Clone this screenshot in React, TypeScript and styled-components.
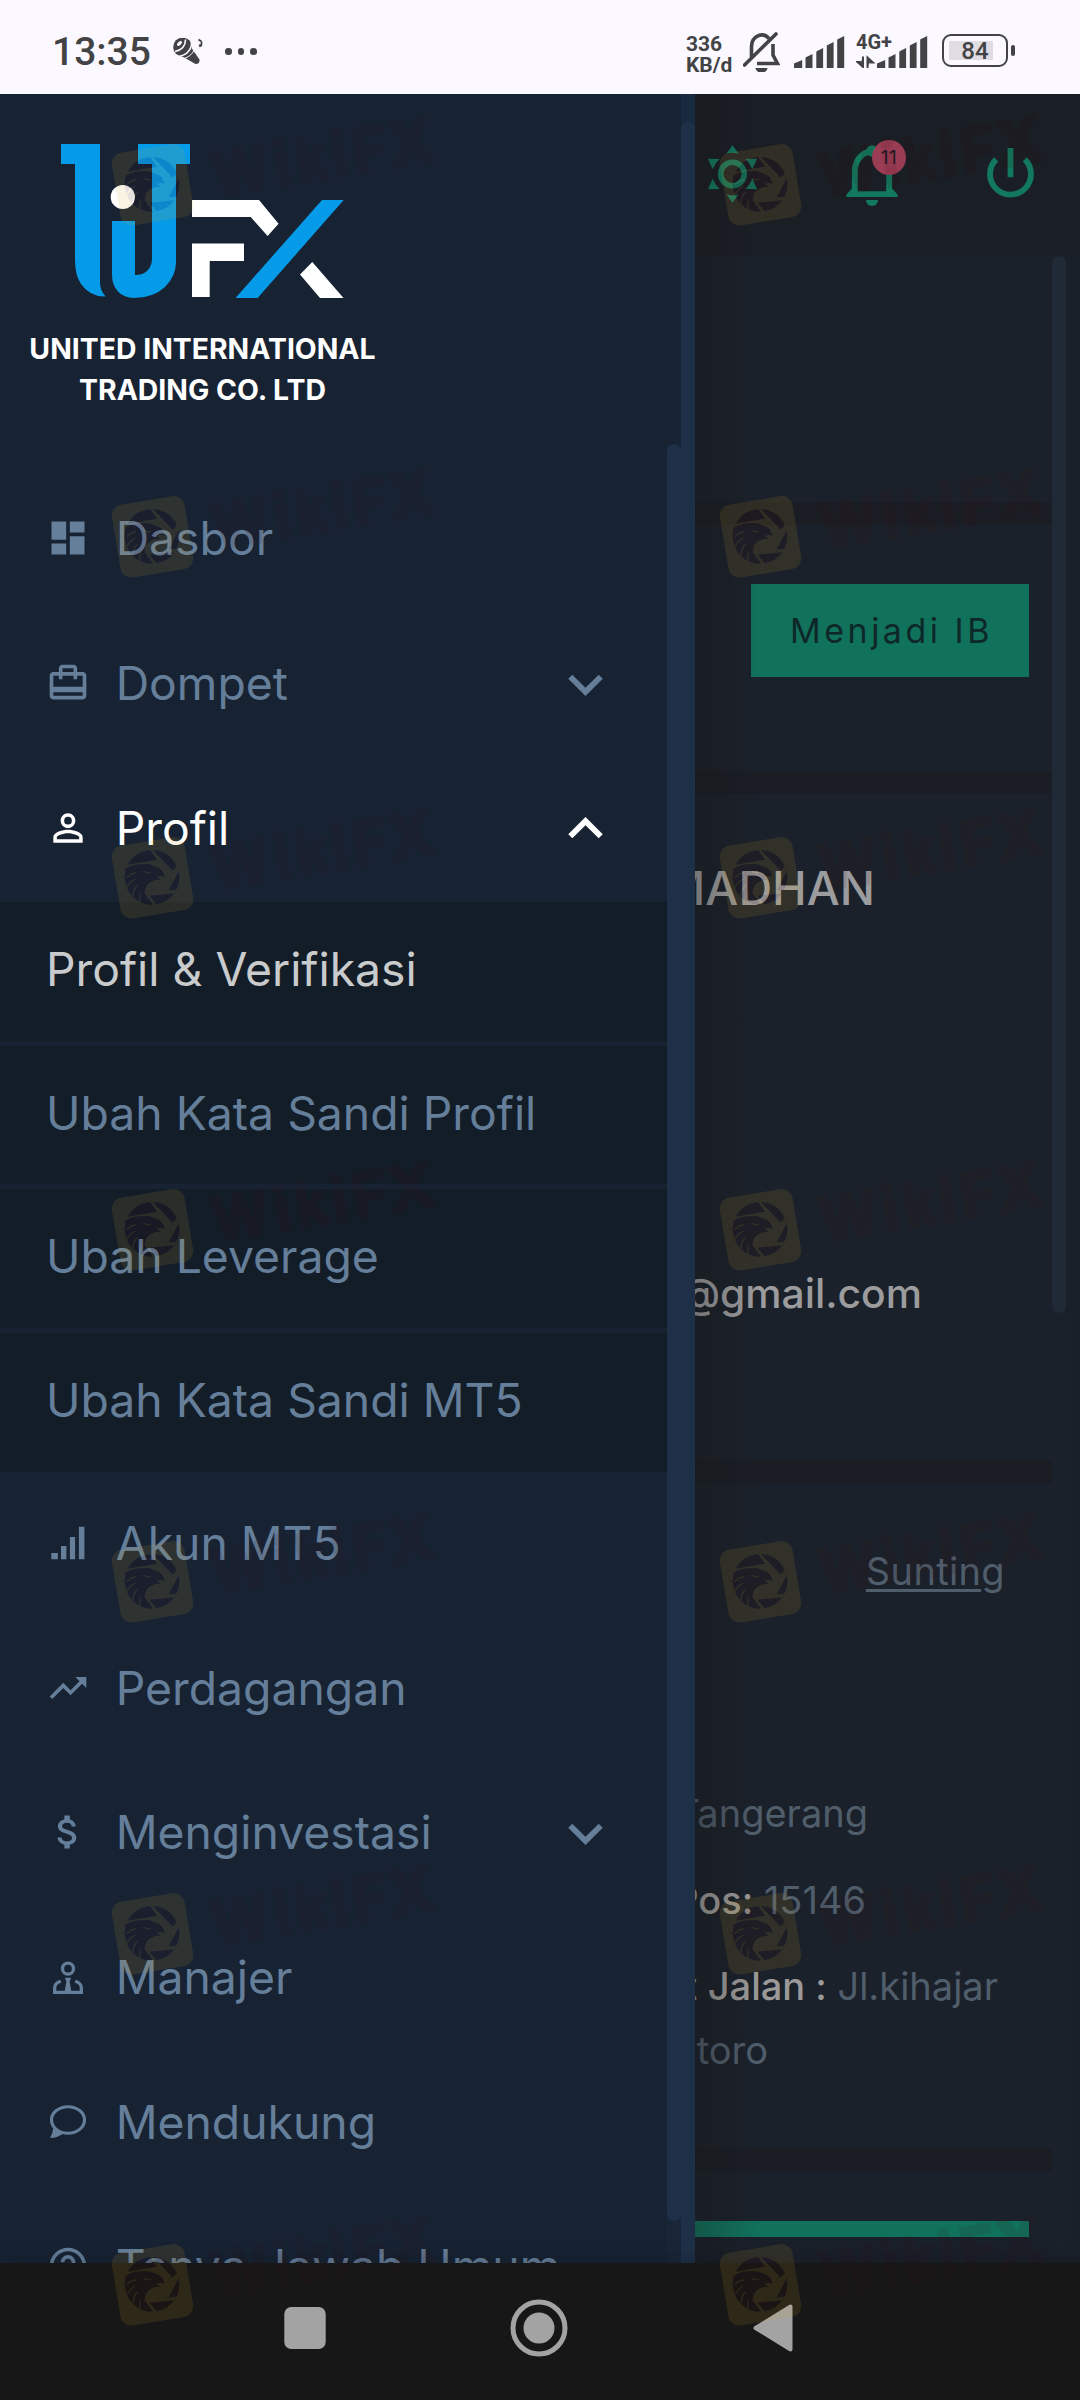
import React from "react";
import styled, { createGlobalStyle } from "styled-components";
import {
  MdDashboard,
  MdCardTravel,
  MdPersonOutline,
  MdTrendingUp,
  MdAttachMoney,
  MdHelpOutline,
  MdKeyboardArrowDown,
  MdKeyboardArrowUp,
} from "react-icons/md";

const GlobalStyle = createGlobalStyle`
  * { box-sizing: border-box; }
  body { margin: 0; background: #171717; }
`;

const ui = `"Inter", "Liberation Sans", sans-serif`;
const system = `"Roboto", "Liberation Sans", sans-serif`;

const Screen = styled.div`
  position: relative;
  display: flex;
  flex-direction: column;
  width: 1080px;
  height: 2400px;
  overflow: hidden;
  font-family: ${ui};
`;

/* ---------- system status bar ---------- */

const StatusBar = styled.header`
  display: flex;
  align-items: center;
  flex: 0 0 94px;
  padding: 9px 65px 0 52px;
  background: #fbf9ff;
  color: #434345;
  font-family: ${system};
`;

const Clock = styled.span`
  width: 121px;
  font-size: 39px;
  font-weight: 500;
  line-height: 44px;
`;

const Dots = styled.span`
  display: flex;
  gap: 6px;
  margin-left: 22px;

  i {
    width: 6.6px;
    height: 6.6px;
    border-radius: 50%;
    background: currentColor;
  }
`;

const StatusRight = styled.div`
  display: flex;
  align-items: center;
  margin-left: auto;
`;

const NetSpeed = styled.div`
  width: 57px;
  padding-top: 6px;
  font-size: 21px;
  font-weight: 700;
  line-height: 21px;
`;

const FirstSim = styled.div`
  display: flex;
  margin-left: 14px;
`;

const SecondSim = styled.div`
  position: relative;
  margin: 0 14px 0 11px;
  height: 32px;
`;

const NetType = styled.span`
  position: absolute;
  left: 0;
  top: -5px;
  font-size: 20px;
  font-weight: 700;
  line-height: 22px;
`;

const Battery = styled.div`
  position: relative;
  display: flex;
  align-items: center;
  justify-content: center;
  width: 66px;
  height: 33px;
  margin: -2px 7px 0 0;
  border: 2.6px solid currentColor;
  border-radius: 9px;
  background: linear-gradient(90deg, #dfdde3 44px, transparent 44px) 4.5px 4.5px / 56px 19px no-repeat;
  font-size: 24px;
  font-weight: 500;
  line-height: 24px;

  &::after {
    content: "";
    position: absolute;
    right: -9px;
    top: 8.5px;
    width: 4px;
    height: 11px;
    border-radius: 2px;
    background: currentColor;
  }
`;

/* ---------- drawer ---------- */

const Body = styled.div`
  display: flex;
  flex: 0 0 2169px;
  overflow: hidden;
`;

const Drawer = styled.aside`
  display: flex;
  flex: 0 0 695px;
  background: #172333;
`;

const DrawerColumn = styled.div`
  display: flex;
  flex-direction: column;
  width: 681px;
`;

const Brand = styled.div`
  display: flex;
  flex-direction: column;
  align-items: center;
  flex: 0 0 350px;
  width: 405px;
  padding-top: 50px;
`;

const BrandName = styled.div`
  margin-top: 30px;
  color: #fff;
  font-size: 28.4px;
  font-weight: 700;
  line-height: 41px;
  text-align: center;
  white-space: nowrap;
`;

const MenuArea = styled.div`
  display: flex;
  flex: 1;
  min-height: 0;
`;

const Menu = styled.nav`
  flex: 0 0 667px;
  padding-top: 22px;
  overflow: hidden;
`;

const MenuRow = styled.div<{ $active?: boolean }>`
  display: flex;
  align-items: center;
  gap: 25.7px;
  height: 144.7px;
  padding: 0 47px 0 46px;
  color: ${(p) => (p.$active ? "#ffffff" : "#657e99")};
  font-size: 46.3px;
  white-space: nowrap;

  > svg {
    flex: none;
  }

  > svg:last-child {
    margin-top: 2px;
  }
`;

const MenuLabel = styled.span`
  flex: 1;
`;

const Submenu = styled.div`
  display: flex;
  flex-direction: column;
  gap: 5px;
  margin: 1.9px 0 -1.4px;
`;

const SubmenuRow = styled.div<{ $active?: boolean; $height: number }>`
  display: flex;
  align-items: center;
  height: ${(p) => p.$height}px;
  padding: 0 46px 4px;
  background: #131d28;
  color: ${(p) => (p.$active ? "#c9cbcd" : "#657e99")};
  font-size: 46.3px;
`;

const ScrollTrack = styled.div<{ $top?: number; $bottom?: number; $track?: string; $fill: string }>`
  display: flex;
  flex: 0 0 14px;
  padding: ${(p) => p.$top ?? 0}px 0 ${(p) => p.$bottom ?? 0}px;
  background: ${(p) => p.$track ?? "transparent"};

  &::before {
    content: "";
    flex: 1;
    border-radius: 7px;
    background: ${(p) => p.$fill};
  }
`;

const OuterTrack = styled(ScrollTrack)`
  padding-bottom: 0;
  &::before {
    border-radius: 7px 7px 0 0;
  }
`;

/* ---------- page behind the drawer ---------- */

const Main = styled.main`
  position: relative;
  display: flex;
  flex: 1;
  flex-direction: column;
  min-width: 0;
  background: #1a202a;

  &::after {
    content: "";
    position: absolute;
    inset: 0 auto 0 0;
    width: 64px;
    background: linear-gradient(90deg, rgba(20, 20, 20, 0.28), rgba(22, 22, 26, 0));
  }
`;

const TopBar = styled.div`
  display: flex;
  align-items: center;
  flex: 0 0 162px;
  padding-left: 7px;
  background: #1a1e25;
`;

const IconSlot = styled.div<{ $gap?: number }>`
  position: relative;
  display: flex;
  width: 60px;
  height: 64px;
  margin-right: ${(p) => p.$gap ?? 0}px;
`;

const Badge = styled.span`
  position: absolute;
  left: 30px;
  top: -3px;
  width: 34px;
  height: 35px;
  border-radius: 50%;
  background: #9b3c55;
  color: #1c1a22;
  font-size: 19px;
  line-height: 35px;
  letter-spacing: 0.6px;
  text-align: center;
`;

const Content = styled.div`
  display: flex;
  flex: 1;
  min-height: 0;
`;

const Cards = styled.div`
  display: flex;
  flex-direction: column;
  gap: 23px;
  flex: 0 0 357px;
  min-width: 0;
  height: 1981px;
  background: #1a1d24;
`;

const Card = styled.section<{ $height: number }>`
  flex: 0 0 ${(p) => p.$height}px;
  overflow: hidden;
  background: #1b212a;
`;

const Button = styled.div`
  display: flex;
  align-items: center;
  justify-content: center;
  width: 278px;
  height: 93px;
  margin: 59px 0 0 56px;
  padding-left: 3px;
  background: #11725b;
  color: #0e2829;
  font-size: 34px;
  letter-spacing: 3.5px;
`;

const WideButton = styled.div`
  height: 16px;
  margin: 50px 23px 0 0;
  background: #11725b;
`;

const Line = styled.div<{ $top: number; $right: number; $size?: number; $weight?: number; $strong?: boolean }>`
  display: flex;
  justify-content: flex-end;
  gap: 10.6px;
  height: 64px;
  margin-top: ${(p) => p.$top}px;
  padding-right: ${(p) => p.$right}px;
  color: ${(p) => (p.$strong ? "#9c9c9e" : "#505d6b")};
  font-size: ${(p) => p.$size ?? 38}px;
  font-weight: ${(p) => p.$weight ?? 400};
  line-height: 64px;
  white-space: nowrap;
`;

const Term = styled.span`
  color: #9c9a98;
  font-weight: 500;
`;

const EditLink = styled.span`
  letter-spacing: 0.35px;
  text-decoration: underline;
  text-decoration-thickness: 2.6px;
  text-underline-offset: 4px;
`;

/* ---------- system navigation ---------- */

const NavBar = styled.footer`
  position: relative;
  display: flex;
  align-items: center;
  gap: 174px;
  flex: 0 0 137px;
  padding: 0 0 7px 275px;
  background: #171717;
  box-shadow: 0 -4px 16px rgba(10, 12, 16, 0.2);
`;

const Watermark = styled.svg<{ $x: number; $y: number }>`
  position: absolute;
  left: ${(p) => p.$x}px;
  top: ${(p) => p.$y}px;
  overflow: visible;
  pointer-events: none;
`;

/* ---------- drawings ---------- */

const SpinnerTopIcon = () => (
  <svg width="30" height="27" viewBox="0 0 30 27">
    <path d="M15 5 L26.5 21.5 Q27 26 22.5 26 L5 16Z" fill="#434345" />
    <circle cx="9.6" cy="9" r="9.4" fill="#434345" />
    <path d="M2 13.5C9 12 12.5 8 12.5 1.5" fill="none" stroke="#fbf9ff" strokeWidth="1.6" />
    <path d="M4.5 18.5C13 18 19 12 18.5 4" fill="none" stroke="#fbf9ff" strokeWidth="1.6" />
    <path d="M11 20.5C16 19 20 15.5 21.5 11" fill="none" stroke="#fbf9ff" strokeWidth="1" />
    <ellipse cx="6.5" cy="5.5" rx="3" ry="1.6" transform="rotate(-40 6.5 5.5)" fill="#fbf9ff" />
    <path d="M25.5 1.5l3 2M28.500 3.500v4" stroke="#434345" strokeWidth="1.7" fill="none" />
    <circle cx="27.3" cy="7.5" r="1.5" fill="#434345" />
  </svg>
);

const BellOffIcon = () => (
  <svg width="37" height="40" viewBox="0 0 37 40" fill="none" stroke="#434345" strokeWidth="3.6">
    <path d="M8.500 25V14.500A10.200 11.500 0 0 1 26 6.500" />
    <path d="M30 12V23L34.500 31.500H14" />
    <path d="M1.500 33L33 2" strokeLinecap="round" />
    <path d="M12.500 36h12a6 4.500 0 0 1-12 0z" fill="#434345" stroke="none" />
  </svg>
);

const bars = [
  [0, 24, 8.2],
  [11.5, 18, 7],
  [22.3, 12, 6.8],
  [32.8, 6, 6.8],
  [43.2, 0, 7],
];

const SignalBars = ({ offset = 0 }: { offset?: number }) => (
  <svg width={51 + offset} height="32" viewBox={`${-offset} 0 ${51 + offset} 32`}>
    {bars.map(([x, y, w]) => (
      <path key={x} d={`M${x} ${y + 3.5}L${x + w} ${y}V32H${x}Z`} fill="#434345" />
    ))}
    {offset > 0 && (
      <path
        d="M-14 20.500v10.500l-5.500-5h3.500M-9.500 32V21.500l5.500 5h-3.500"
        fill="#434345"
        stroke="#434345"
        strokeWidth="2"
      />
    )}
  </svg>
);

const BrandLogo = () => (
  <svg width="283" height="154" viewBox="61 144 283 154">
    <g fill="#069be8">
      <path d="M61 144H100V283Q100 290 105.500 296.500Q90 297 81 284Q75 275 75 260V164H61Z" />
      <path d="M138 144H190V164H176V262Q176 276 165 287Q153 298 134 298Q124 298 118 291.500Q112 285 112 275V221H135V275Q143 275 147.500 270.500Q152 266 152 258V164H138Z" />
      <path d="M322 200H343.700L257.600 298H235.500Z" />
    </g>
    <g fill="#fff">
      <circle cx="122.800" cy="197" r="12.100" />
      <path d="M192 200H259L278.600 223.700L267.600 236L250.700 217H192Z" />
      <path d="M192 243.500H244V261H209.700V297H192Z" />
      <path d="M312.300 262L343.500 298H320L300 274.500Z" />
    </g>
  </svg>
);

const SignalIcon = () => (
  <svg width="44" height="44" viewBox="46 1521 44 44" fill="currentColor">
    <path d="M51.300 1553h6.600v6.300h-6.600zM61 1546h5.400v13.300H61zM69.900 1537h5.200v22.300h-5.200zM78.900 1526.700h5.500v32.600h-5.500z" />
  </svg>
);

const ManagerIcon = () => (
  <svg width="44" height="44" viewBox="0 0 24 24" fill="none" stroke="currentColor" strokeWidth="1.8">
    <circle cx="12" cy="7.450" r="3" />
    <path d="M8.100 14.300C6 14.900 4.700 16 4.700 18V20.400H19.300V18C19.300 16 18 14.900 15.900 14.300" />
    <path d="M10.300 12.400H13.700L12.900 14.400 13.900 20.400H10.100L11.100 14.400Z" fill="currentColor" stroke="none" />
  </svg>
);

const ChatIcon = () => (
  <svg width="44" height="44" viewBox="0 0 24 24">
    <ellipse cx="12" cy="10.900" rx="9" ry="7.250" fill="none" stroke="currentColor" strokeWidth="1.7" />
    <path d="M2.200 20.700Q3.700 18.500 4 15.200L9.600 18Q6.600 20.700 2.200 20.700Z" fill="currentColor" />
  </svg>
);

const SunIcon = () => (
  <svg width="60" height="64" viewBox="-30.500 -31 60 64" fill="#12795f">
    <circle r="11.800" fill="none" stroke="#12795f" strokeWidth="5.600" />
    <path d="M0-28.700L6.200-20.200Q0-22.500-6.200-20.200ZM0 28.700L6.200 20.200Q0 22.500-6.200 20.200Z" />
    <path d="M-24.600-15.300L-13-14.900Q-17.500-11-19.800-4.800ZM24.600-15.300L13-14.900Q17.500-11 19.800-4.800Z" />
    <path d="M-24.600 15.300L-13 14.900Q-17.500 11-19.800 4.800ZM24.600 15.300L13 14.900Q17.500 11 19.800 4.800Z" />
  </svg>
);

const BellIcon = () => (
  <svg width="60" height="64" viewBox="0 0 60 64" fill="#12795f">
    <path d="M12.800 49V28A17.200 19.500 0 0 1 47.200 28V49" fill="none" stroke="#12795f" strokeWidth="5.800" />
    <circle cx="30" cy="8" r="5.800" />
    <path d="M4.500 54v-2.500l6-6.500h5v3.300h29V45h5l6 6.500V54z" />
    <path d="M24 57h12a6 6 0 0 1-12 0z" />
  </svg>
);

const PowerIcon = () => (
  <svg width="60" height="64" viewBox="-30.500 -31 60 64" fill="none" stroke="#12795f" strokeWidth="5.800">
    <path d="M-14.300-14.600A20.500 20.500 0 1 0 14.300-14.600" />
    <path d="M0-26V3.200" />
  </svg>
);

const RecentsIcon = () => (
  <svg width="60" height="60" viewBox="-30 -30 60 60">
    <rect x="-20.700" y="-21" width="41.400" height="42" rx="7" fill="#a3a3a3" />
  </svg>
);

const HomeIcon = () => (
  <svg width="60" height="60" viewBox="-30 -30 60 60">
    <circle r="26" fill="none" stroke="#a3a3a3" strokeWidth="5" />
    <circle r="15.500" fill="#a3a3a3" />
  </svg>
);

const BackIcon = () => (
  <svg width="60" height="60" viewBox="-30 -30 60 60">
    <path d="M-17.500 0L17.500-21.500V21.500Z" fill="#a3a3a3" stroke="#a3a3a3" strokeWidth="4" strokeLinejoin="round" />
  </svg>
);

const glyphs: [string, number, number][] = [
  ["W", 0, 58],
  ["i", 63, 16],
  ["k", 85, 32],
  ["i", 121, 16],
  ["F", 142, 36],
  ["X", 179, 46],
];

const WikiMark = ({ x, y }: { x: number; y: number }) => (
  <Watermark $x={x} $y={y} width="330" height="82" viewBox="0 0 330 82">
    <g opacity="0.12" transform="scale(0.3333)">
      <rect x="11" y="12" width="221" height="221" rx="33" transform="rotate(-9.500 121.500 122)" fill="#cfa42c" />
      <circle cx="120" cy="121" r="82" fill="#3a0008" />
      <path
        d="M42 84L135 68L112 36L124 40L182 101L200 82L206 92L170 160L200 158L196 168L112 176L138 206L126 206L100 172L40 150Z"
        fill="#cfa42c"
      />
      <path
        d="M40 96Q62 80 92 82Q116 78 132 90Q154 94 158 121Q148 113 134 120L148 130Q134 126 122 132Q98 142 98 168Q98 190 114 203Q94 202 78 190Q44 168 38 124Z"
        fill="#3a0008"
      />
      <path
        d="M94 102q12 8 22 4M44 122q14-14 28-14M46 150q10-18 24-24M62 178q4-24 14-34M84 194q-2-14 2-26"
        fill="none"
        stroke="#cfa42c"
        strokeWidth="4"
      />
    </g>
    <g
      opacity="0.1"
      transform="translate(103.500 53.500) rotate(-9.500)"
      fontFamily="Inter, sans-serif"
      fontWeight="700"
      fontSize="62"
      fill="#3a0a10"
      stroke="#3a0a10"
      strokeWidth="3"
      strokeLinejoin="round"
    >
      {glyphs.map(([ch, gx, w]) => (
        <text key={gx} x={gx} y={0} textLength={w} lengthAdjust="spacingAndGlyphs">
          {ch}
        </text>
      ))}
    </g>
  </Watermark>
);

const markRows = [144, 496, 837, 1189, 1541, 1893, 2244];

export default function App() {
  return (
    <Screen>
      <GlobalStyle />
      <StatusBar>
        <Clock>13:35</Clock>
        <SpinnerTopIcon />
        <Dots>
          <i />
          <i />
          <i />
        </Dots>
        <StatusRight>
          <NetSpeed>
            336
            <br />
            KB/d
          </NetSpeed>
          <BellOffIcon />
          <FirstSim>
            <SignalBars />
          </FirstSim>
          <SecondSim>
            <SignalBars offset={21} />
            <NetType>4G+</NetType>
          </SecondSim>
          <Battery>84</Battery>
        </StatusRight>
      </StatusBar>

      <Body>
        <Drawer>
          <DrawerColumn>
            <Brand>
              <BrandLogo />
              <BrandName>
                UNITED INTERNATIONAL
                <br />
                TRADING CO. LTD
              </BrandName>
            </Brand>
            <MenuArea>
              <Menu>
                <MenuRow>
                  <MdDashboard size={44} />
                  <MenuLabel>Dasbor</MenuLabel>
                </MenuRow>
                <MenuRow>
                  <MdCardTravel size={44} />
                  <MenuLabel>Dompet</MenuLabel>
                  <MdKeyboardArrowDown size={69} />
                </MenuRow>
                <MenuRow $active>
                  <MdPersonOutline size={44} />
                  <MenuLabel>Profil</MenuLabel>
                  <MdKeyboardArrowUp size={69} />
                </MenuRow>
                <Submenu>
                  <SubmenuRow $height={139} $active>
                    Profil &amp; Verifikasi
                  </SubmenuRow>
                  <SubmenuRow $height={138}>Ubah Kata Sandi Profil</SubmenuRow>
                  <SubmenuRow $height={139}>Ubah Leverage</SubmenuRow>
                  <SubmenuRow $height={139}>Ubah Kata Sandi MT5</SubmenuRow>
                </Submenu>
                <MenuRow>
                  <SignalIcon />
                  <MenuLabel>Akun MT5</MenuLabel>
                </MenuRow>
                <MenuRow>
                  <MdTrendingUp size={44} />
                  <MenuLabel>Perdagangan</MenuLabel>
                </MenuRow>
                <MenuRow>
                  <MdAttachMoney size={44} />
                  <MenuLabel>Menginvestasi</MenuLabel>
                  <MdKeyboardArrowDown size={69} />
                </MenuRow>
                <MenuRow>
                  <ManagerIcon />
                  <MenuLabel>Manajer</MenuLabel>
                </MenuRow>
                <MenuRow>
                  <ChatIcon />
                  <MenuLabel>Mendukung</MenuLabel>
                </MenuRow>
                <MenuRow>
                  <MdHelpOutline size={44} />
                  <MenuLabel>Tanya Jawab Umum</MenuLabel>
                </MenuRow>
              </Menu>
              <ScrollTrack $bottom={42} $track="#192638" $fill="#1e3047" />
            </MenuArea>
          </DrawerColumn>
          <OuterTrack $top={28} $track="#182a3f" $fill="#1e3047" />
        </Drawer>

        <Main>
          <TopBar>
            <IconSlot $gap={80}>
              <SunIcon />
            </IconSlot>
            <IconSlot $gap={78}>
              <BellIcon />
              <Badge>11</Badge>
            </IconSlot>
            <IconSlot>
              <PowerIcon />
            </IconSlot>
          </TopBar>
          <Content>
            <Cards>
              <Card $height={246} />
              <Card $height={246}>
                <Button>Menjadi IB</Button>
              </Card>
              <Card $height={666}>
                <Line $top={62} $right={177} $size={46.6} $weight={500} $strong>
                  MADHAN
                </Line>
                <Line $top={341} $right={130} $size={40.8} $weight={500} $strong>
                  @gmail.com
                </Line>
              </Card>
              <Card $height={665}>
                <Line $top={56} $right={47}>
                  <EditLink>Sunting</EditLink>
                </Line>
                <Line $top={178} $right={184}>
                  Tangerang
                </Line>
                <Line $top={23} $right={186}>
                  <Term>Pos:</Term>
                  <span>15146</span>
                </Line>
                <Line $top={22} $right={54}>
                  <Term>t</Term>
                  <Term>Jalan :</Term>
                  <span>Jl.kihajar</span>
                </Line>
                <Line $top={0} $right={284}>
                  toro
                </Line>
              </Card>
              <Card $height={66}>
                <WideButton />
              </Card>
            </Cards>
            <ScrollTrack $bottom={950} $track="#1b212a" $fill="#1f2a36" />
          </Content>
        </Main>
      </Body>

      <NavBar>
        <RecentsIcon />
        <HomeIcon />
        <BackIcon />
      </NavBar>

      {markRows.map((y) => (
        <React.Fragment key={y}>
          <WikiMark x={112} y={y} />
          <WikiMark x={720} y={y} />
        </React.Fragment>
      ))}
    </Screen>
  );
}
